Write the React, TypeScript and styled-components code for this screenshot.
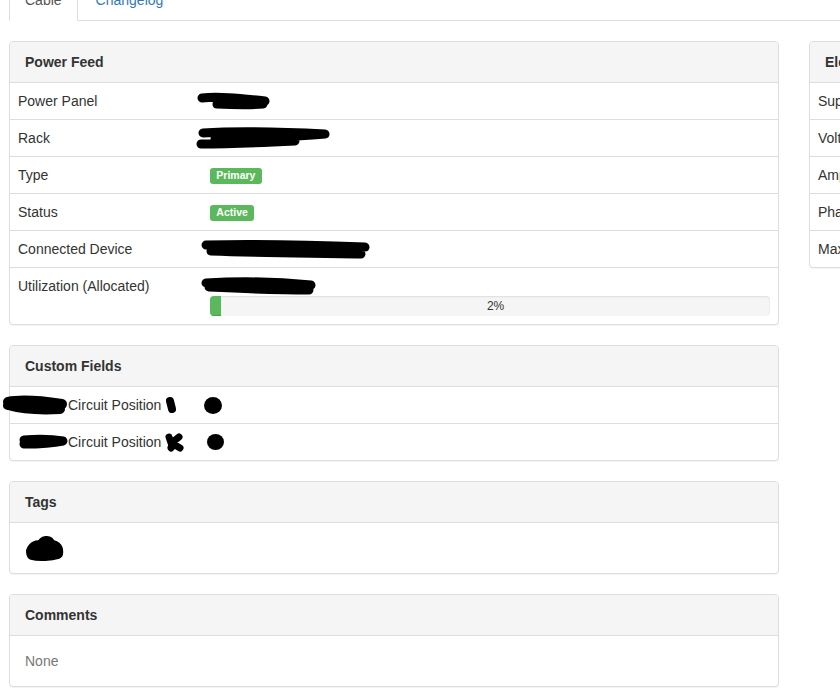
import React from "react";
import styled, { createGlobalStyle } from "styled-components";

const Global = createGlobalStyle`
  html, body { margin: 0; padding: 0; background: #fff; overflow: hidden; }
  body {
    font-family: "Liberation Sans", Arial, sans-serif;
    font-size: 14px;
    line-height: 1.428571;
    color: #333;
  }
  * { box-sizing: border-box; }
`;

const Page = styled.div`
  margin-top: -21px;
  padding-left: 9px;
  width: 840px;
`;

const Tabs = styled.ul`
  list-style: none;
  margin: 0 0 20px 0;
  padding: 0;
  display: flex;
  border-bottom: 1px solid #ddd;
`;

const TabItem = styled.li`
  margin-bottom: -1px;
`;

const TabLink = styled.a<{ $active?: boolean }>`
  display: block;
  padding: 10px 15px;
  line-height: 20px;
  margin-right: 2px;
  border: 1px solid ${(p) => (p.$active ? "#ddd" : "transparent")};
  border-bottom-color: transparent;
  border-radius: 4px 4px 0 0;
  background: ${(p) => (p.$active ? "#fff" : "transparent")};
  color: ${(p) => (p.$active ? "#555" : "#337ab7")};
  text-decoration: none;
`;

const Columns = styled.div`
  display: flex;
  gap: 30px;
  align-items: flex-start;
`;

const LeftCol = styled.div`
  width: 770px;
  flex: none;
`;

const RightCol = styled.div`
  width: 370px;
  flex: none;
`;

const Panel = styled.div`
  border: 1px solid #ddd;
  border-radius: 4px;
  background: #fff;
  box-shadow: 0 1px 1px rgba(0, 0, 0, 0.05);
  margin-bottom: 20px;
`;

const PanelHeading = styled.div`
  background: #f5f5f5;
  border-bottom: 1px solid #ddd;
  padding: 10px 15px;
  line-height: 20px;
  font-weight: bold;
  color: #333;
  border-radius: 3px 3px 0 0;
  white-space: nowrap;
`;

const PanelBody = styled.div<{ $muted?: boolean }>`
  padding: 15px;
  line-height: 20px;
  color: ${(p) => (p.$muted ? "#777" : "#333")};
`;

const Table = styled.table`
  width: 100%;
  border-collapse: collapse;
  border-spacing: 0;
`;

const Row = styled.tr`
  & + & td {
    border-top: 1px solid #ddd;
  }
`;

const Label = styled.td`
  width: 25%;
  padding: 8px;
  line-height: 20px;
  vertical-align: top;
  white-space: nowrap;
`;

const Value = styled.td`
  padding: 8px;
  line-height: 20px;
  vertical-align: top;
`;

const Badge = styled.span`
  display: inline-block;
  background: #5cb85c;
  color: #fff;
  font-size: 10.5px;
  font-weight: bold;
  line-height: 1;
  padding: 2.1px 6.3px 3.2px;
  border-radius: 3px;
  vertical-align: baseline;
  position: relative;
  top: -1px;
`;

const Progress = styled.div`
  height: 20px;
  background: #f5f5f5;
  border-radius: 4px;
  box-shadow: inset 0 1px 2px rgba(0, 0, 0, 0.1);
  overflow: hidden;
  display: flex;
`;

const ProgressBar = styled.div`
  background: #5cb85c;
  height: 100%;
  flex: none;
  box-shadow: inset 0 -1px 0 rgba(0, 0, 0, 0.15);
`;

const ProgressText = styled.span`
  flex: 1;
  text-align: center;
  font-size: 12px;
  line-height: 20px;
  color: #333;
`;

const InkLine = styled.div`
  height: 20px;
  display: flex;
  align-items: center;
`;

const Ink = styled.svg<{ $ml?: number; $mr?: number }>`
  display: inline-block;
  vertical-align: middle;
  margin-left: ${(p) => p.$ml ?? 0}px;
  margin-right: ${(p) => p.$mr ?? 0}px;
  overflow: visible;
`;

const Cell = styled.div`
  display: flex;
  align-items: center;
  height: 20px;
`;

type Blob = { w: number; h: number; d: string; sw: number; ml?: number; mr?: number; filled?: boolean };

const Scribble: React.FC<Blob> = ({ w, h, d, sw, ml, mr, filled }) => (
  <Ink width={w} height={h} viewBox={`0 0 ${w} ${h}`} $ml={ml} $mr={mr}>
    <path
      d={d}
      fill={filled ? "#000" : "none"}
      stroke="#000"
      strokeWidth={sw}
      strokeLinecap="round"
      strokeLinejoin="round"
    />
  </Ink>
);

const Dot: React.FC<{ w: number; h: number; ml?: number; mr?: number }> = ({ w, h, ml, mr }) => (
  <Ink width={w} height={h} viewBox={`0 0 ${w} ${h}`} $ml={ml} $mr={mr}>
    <ellipse cx={w / 2} cy={h / 2} rx={w / 2} ry={h / 2} fill="#000" />
  </Ink>
);

const rightRows = ["Supply", "Voltage", "Amperage", "Phase", "Max Utilization"];

export default function App() {
  return (
    <>
      <Global />
      <Page>
        <Tabs>
          <TabItem>
            <TabLink $active>Cable</TabLink>
          </TabItem>
          <TabItem>
            <TabLink>Changelog</TabLink>
          </TabItem>
        </Tabs>
        <Columns>
          <LeftCol>
            <Panel>
              <PanelHeading>Power Feed</PanelHeading>
              <Table>
                <tbody>
                  <Row>
                    <Label>Power Panel</Label>
                    <Value>
                      <Cell>
                        <Scribble w={74} h={18} sw={9} ml={-13} d="M5 6 C 20 4, 40 6, 68 9 C 55 11, 40 12, 20 12 C 40 13, 55 13, 66 12" />
                      </Cell>
                    </Value>
                  </Row>
                  <Row>
                    <Label>Rack</Label>
                    <Value>
                      <Cell>
                        <Scribble w={136} h={22} sw={9} ml={-15} d="M8 6 C 40 4, 90 5, 130 7 C 100 10, 60 11, 20 12 C 50 14, 70 15, 100 14 C 60 16, 30 17, 6 17" />
                      </Cell>
                    </Value>
                  </Row>
                  <Row>
                    <Label>Type</Label>
                    <Value>
                      <Badge>Primary</Badge>
                    </Value>
                  </Row>
                  <Row>
                    <Label>Status</Label>
                    <Value>
                      <Badge>Active</Badge>
                    </Value>
                  </Row>
                  <Row>
                    <Label>Connected Device</Label>
                    <Value>
                      <Cell>
                        <Scribble w={170} h={21} sw={9} ml={-9} d="M5 6 C 50 5, 110 6, 164 8 C 120 11, 60 11, 10 12 C 60 14, 110 14, 160 15" />
                      </Cell>
                    </Value>
                  </Row>
                  <Row>
                    <Label>Utilization (Allocated)</Label>
                    <Value>
                      <InkLine>
                        <Scribble w={115} h={18} sw={9} ml={-9} d="M5 6 C 40 4, 80 5, 110 8 C 80 11, 40 11, 8 10 C 50 12, 80 13, 108 13" />
                      </InkLine>
                      <Progress>
                        <ProgressBar style={{ width: "2%" }} />
                        <ProgressText>2%</ProgressText>
                      </Progress>
                    </Value>
                  </Row>
                </tbody>
              </Table>
            </Panel>

            <Panel>
              <PanelHeading>Custom Fields</PanelHeading>
              <Table>
                <tbody>
                  <Row>
                    <Label>
                      <Cell>
                        <Scribble w={66} h={20} sw={10} ml={-16} d="M6 7 C 20 4, 40 6, 60 9 C 45 11, 25 12, 6 10 C 20 14, 40 15, 58 14" />
                        Circuit Position
                        <Scribble w={10} h={16} sw={8} ml={5} d="M4 4 L 6 12" />
                      </Cell>
                    </Label>
                    <Value>
                      <Cell>
                        <Dot w={18} h={17} ml={-6} />
                      </Cell>
                    </Value>
                  </Row>
                  <Row>
                    <Label>
                      <Cell>
                        <Scribble w={49} h={16} sw={9} ml={1} d="M5 6 C 18 5, 32 5, 44 7 C 30 10, 18 10, 5 10" />
                        Circuit Position
                        <Scribble w={18} h={19} sw={7} ml={4} d="M4 4 C 6 10, 8 14, 6 15 M 9 8 L 14 4 M 10 12 L 15 15" />
                      </Cell>
                    </Label>
                    <Value>
                      <Cell>
                        <Dot w={17} h={16} ml={-3} />
                      </Cell>
                    </Value>
                  </Row>
                </tbody>
              </Table>
            </Panel>

            <Panel>
              <PanelHeading>Tags</PanelHeading>
              <PanelBody>
                <Cell>
                  <Scribble filled w={40} h={26} sw={10} d="M6 16 C 8 11, 12 9, 16 11 C 18 5, 24 4, 26 10 C 32 10, 34 14, 33 19 C 26 21, 14 22, 7 20 C 6 19, 6 17, 6 16 Z" />
                </Cell>
              </PanelBody>
            </Panel>

            <Panel>
              <PanelHeading>Comments</PanelHeading>
              <PanelBody $muted>None</PanelBody>
            </Panel>
          </LeftCol>

          <RightCol>
            <Panel>
              <PanelHeading>Electrical Characteristics</PanelHeading>
              <Table>
                <tbody>
                  {rightRows.map((r) => (
                    <Row key={r}>
                      <Label>{r}</Label>
                      <Value />
                    </Row>
                  ))}
                </tbody>
              </Table>
            </Panel>
          </RightCol>
        </Columns>
      </Page>
    </>
  );
}
